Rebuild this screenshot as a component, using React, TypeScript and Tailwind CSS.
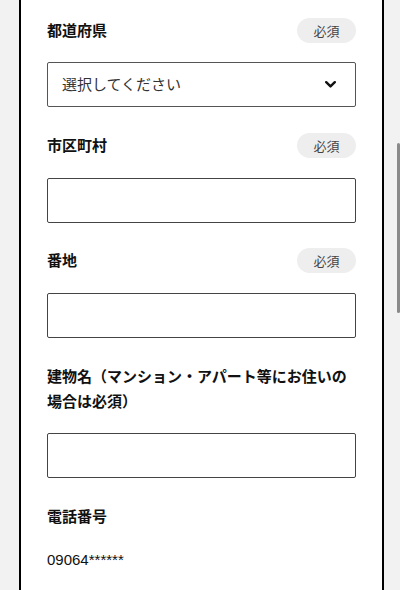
const font = { fontFamily: '"Noto Sans CJK JP", "Noto Sans", sans-serif' };

const Badge = () => (
  <span className="flex h-[25px] w-[59px] items-center justify-center rounded-full bg-[#eeeeee] text-[13px] text-[#444]">
    必須
  </span>
);

const LabelRow = ({ label, required }: { label: string; required?: boolean }) => (
  <div className="flex h-[25px] items-center justify-between">
    <span className="text-[15px] font-bold text-[#111]">{label}</span>
    {required && <Badge />}
  </div>
);

const TextBox = ({ className = "" }: { className?: string }) => (
  <div className={`h-[45px] rounded-[2px] border-[1.5px] border-[#444] bg-white ${className}`} />
);

export default function App() {
  return (
    <div className="relative flex h-[590px] overflow-hidden bg-[#f2f2f2]" style={font}>
      <div className="ml-[19px] w-[365px] border-x-2 border-black bg-white px-[26px] pt-[18px]">
        {/* 都道府県 */}
        <LabelRow label="都道府県" required />
        <div className="mt-[19px] flex h-[45px] items-center justify-between rounded-[2px] border-[1.5px] border-[#555] pl-[14px] pr-[19px]">
          <span className="text-[15px] text-[#333]">選択してください</span>
          <svg width="11" height="7" viewBox="0 0 11 7" fill="none">
            <polyline points="1.2,1.2 5.5,5.4 9.8,1.2" stroke="#111" strokeWidth="2.4" strokeLinecap="round" strokeLinejoin="round" />
          </svg>
        </div>

        {/* 市区町村 */}
        <div className="mt-[26px]">
          <LabelRow label="市区町村" required />
          <TextBox className="mt-[20px]" />
        </div>

        {/* 番地 */}
        <div className="mt-[25px]">
          <LabelRow label="番地" required />
          <TextBox className="mt-[20px]" />
        </div>

        {/* 建物名 */}
        <div className="mt-[25px]">
          <p className="text-[15px] font-bold leading-[25px] text-[#111]">
            建物名（マンション・アパート等にお住いの場合は必須）
          </p>
          <TextBox className="mt-[20px]" />
        </div>

        {/* 電話番号 */}
        <div className="mt-[26px]">
          <LabelRow label="電話番号" />
          <p
            className="mt-[21px] text-[15px] leading-[20px] text-[#111]"
            style={{ fontFamily: '"Liberation Sans", Arial, sans-serif' }}
          >
            09064******
          </p>
        </div>
      </div>

      {/* scrollbar */}
      <div className="absolute right-0 top-[143px] h-[170px] w-[3px] rounded-full bg-[#8a8a8a]" />
    </div>
  );
}
